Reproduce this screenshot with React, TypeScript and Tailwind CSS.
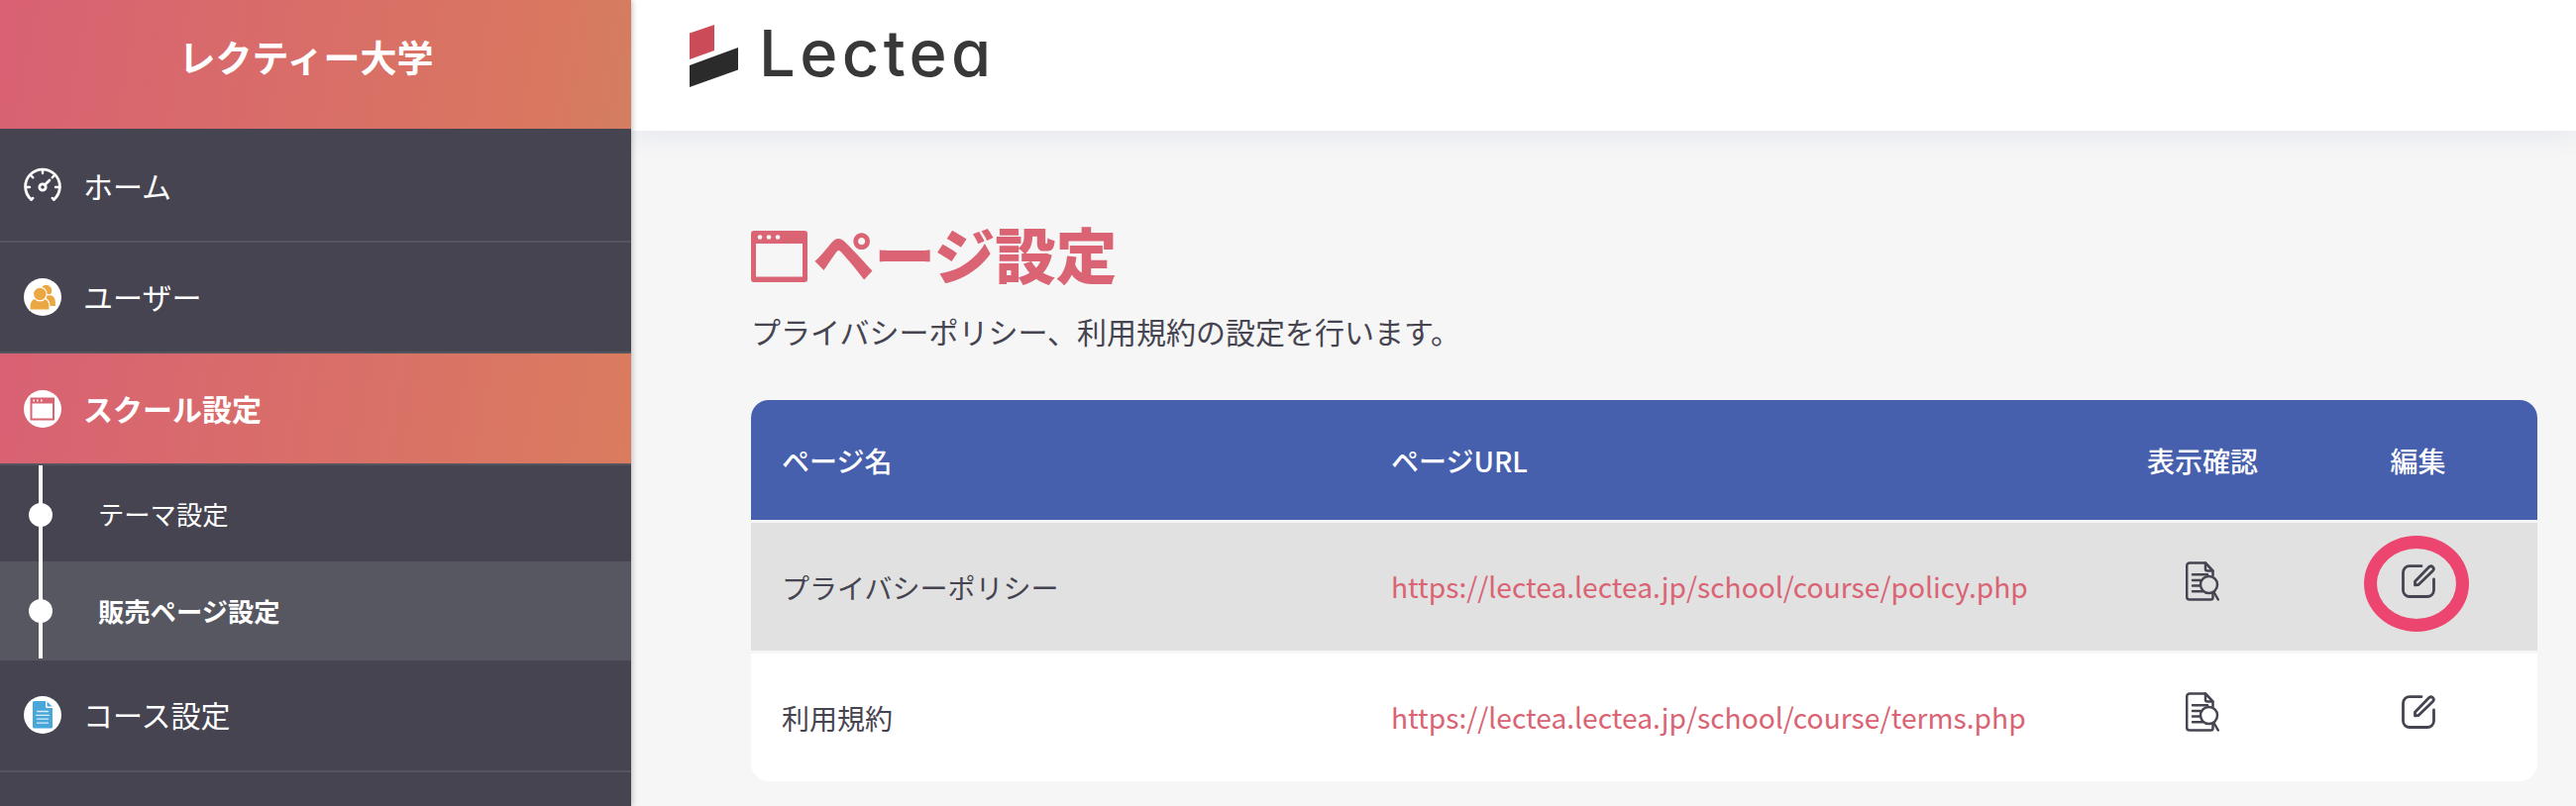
import type { ReactNode } from "react";

type MenuItemProps = {
  icon: ReactNode;
  label: string;
  active?: boolean;
  className: string;
};

type PageRow = {
  name: string;
  url: string;
  highlighted: boolean;
};

const pages: PageRow[] = [
  {
    name: "プライバシーポリシー",
    url: "https://lectea.lectea.jp/school/course/policy.php",
    highlighted: true,
  },
  {
    name: "利用規約",
    url: "https://lectea.lectea.jp/school/course/terms.php",
    highlighted: false,
  },
];

function GaugeIcon() {
  return (
    <svg viewBox="0 0 38 38" className="size-[38px]" fill="none" stroke="#fff" strokeWidth="2.8" strokeLinecap="round">
      <path d="M7.5 32.5A17.4 17.4 0 1 1 30.5 32.5" />
      <path d="M7.5 32.500l1.800-1.500M30.500 32.500l-1.800-1.500M19 2.500v3.500M2.500 20h3.500M35.500 20h-3.500M7.500 8.500l1.800 1.800M30.500 8.500l-1.800 1.800" strokeWidth="2.400" />
      <circle cx="19" cy="20" r="3.200" />
      <path d="M21.500 17.500l4.500-4.500" />
    </svg>
  );
}

function UsersIcon() {
  return (
    <svg viewBox="0 0 38 38" className="size-[38px]">
      <circle cx="19" cy="19" r="19" fill="#fff" />
      <g fill="#eba742" stroke="#fff" strokeWidth="1.2">
        <circle cx="22.500" cy="12.500" r="6.400" />
        <path d="M20 28.700h12.500v-4c0-4-2-7-5-8h-8z" />
        <path d="M6 32.200v-4.500c0-4.500 3-7.500 6.500-7.500h7c3.500 0 6.500 3 6.500 7.500v4.500z" />
        <circle cx="16.300" cy="16" r="6.800" />
      </g>
    </svg>
  );
}

function WindowIcon() {
  return (
    <svg viewBox="0 0 38 38" className="size-[38px]">
      <circle cx="19" cy="19" r="19" fill="#fff" />
      <rect x="7.500" y="8.500" width="22.500" height="21" fill="none" stroke="#d96572" strokeWidth="2" />
      <path d="M7 8h23.500v5.500H7z" fill="#d96572" />
      <path d="M9.500 10.500h1.500M13 10.500h1.500M17 10.500h1.500" stroke="#fff" strokeWidth="1.800" />
    </svg>
  );
}

function DocumentIcon() {
  return (
    <svg viewBox="0 0 38 38" className="size-[38px]">
      <circle cx="19" cy="19" r="19" fill="#fff" />
      <path d="M10.500 5h11.500v5.500c0 1 .6 1.500 1.500 1.500h5.500v19a1.500 1.500 0 0 1-1.500 1.500h-17A1.500 1.500 0 0 1 9 31V6.500A1.500 1.500 0 0 1 10.500 5z" fill="#49a6d8" />
      <path d="M23.500 5.500l5 5h-5z" fill="#49a6d8" />
      <path d="M13.500 15.500h11M12.500 19.300h13M13.500 23.200h11M13.500 27.200h11" stroke="#d8eef9" strokeWidth="1.300" strokeLinecap="round" />
    </svg>
  );
}

function HeadingIcon() {
  return (
    <svg viewBox="0 0 57 52" className="h-[52px] w-[57px]">
      <path
        fillRule="evenodd"
        fill="#da6374"
        d="M3 0h51a3 3 0 0 1 3 3v46a3 3 0 0 1-3 3H3a3 3 0 0 1-3-3V3a3 3 0 0 1 3-3zM5 13v33.500h47V13z"
      />
      <g fill="#f6f6f6">
        <circle cx="9" cy="6.500" r="2.300" />
        <circle cx="18" cy="6.500" r="2.300" />
        <circle cx="27" cy="6.500" r="2.300" />
      </g>
    </svg>
  );
}

function PreviewIcon() {
  return (
    <svg viewBox="0 0 34 40" className="h-10 w-[34px]" fill="none" stroke="#454450" strokeWidth="2.500" strokeLinecap="round" strokeLinejoin="round">
      <path d="M27.500 14.500V9.500L20 1.500H4A2.800 2.800 0 0 0 1.200 4.300v31.400A2.800 2.800 0 0 0 4 38.500h21.500a2 2 0 0 0 2-2V33" />
      <path d="M20 1.500V7.500a2 2 0 0 0 2 2h5.500z" />
      <path d="M7 13.200h15M7 19h8M7 24.500h7M7 30.200h10" />
      <circle cx="23.500" cy="23.500" r="8.500" />
      <path d="M28.500 31l4.300 7.500" />
    </svg>
  );
}

function EditIcon() {
  return (
    <svg viewBox="0 0 34 34" className="size-[34px]" fill="none" stroke="#454450" strokeWidth="2.800" strokeLinecap="round" strokeLinejoin="round">
      <path d="M20 1.700H8A6.500 6.500 0 0 0 1.500 8.200v18A6.500 6.500 0 0 0 8 32.500h18a6.500 6.500 0 0 0 6.500-6.300V15" />
      <path d="M13.500 20.800v-3.600L27.500 2.700a2.600 2.600 0 0 1 4 3.700L17 20.500z" />
    </svg>
  );
}

function MenuItem({ icon, label, active = false, className }: MenuItemProps) {
  return (
    <li
      className={`flex items-center gap-[22px] border-b-2 border-[#55555f] pl-6 text-[30px] leading-none ${
        active ? "bg-linear-[100deg,#d86173,#da7c5f] bg-origin-border font-bold" : ""
      } ${className}`}
    >
      {icon}
      <span className="pb-[2px]">{label}</span>
    </li>
  );
}

function Sidebar() {
  return (
    <aside className="relative z-10 flex w-[637px] shrink-0 flex-col bg-[#454450] text-white shadow-[1px_0_6px_rgba(0,0,0,0.25)]">
      <div className="flex h-[130px] items-center justify-center bg-linear-[100deg,#d86173,#d97760_85%,#d47e60] pb-[16px] pr-[19px] text-[37px] font-bold leading-none">
        レクティー大学
      </div>
      <ul>
        <MenuItem icon={<GaugeIcon />} label="ホーム" className="h-[115px] pt-[3px]" />
        <MenuItem icon={<UsersIcon />} label="ユーザー" className="h-[112px]" />
        <MenuItem icon={<WindowIcon />} label="スクール設定" active className="h-[113px]" />
      </ul>
      <div className="relative text-[26.3px] leading-none">
        <div className="flex h-[97px] items-center gap-[46px] pl-[29px] pt-[2px]">
          <span className="size-6 rounded-full bg-white" />
          <span>テーマ設定</span>
        </div>
        <div className="flex h-[100px] items-center gap-[46px] bg-[#575761] pl-[29px] font-bold">
          <span className="size-6 rounded-full bg-white" />
          <span>販売ページ設定</span>
        </div>
        <span className="absolute left-[39px] top-0 h-[195px] w-1 bg-white" />
      </div>
      <ul>
        <MenuItem icon={<DocumentIcon />} label="コース設定" className="h-[113px] pb-[2px]" />
      </ul>
    </aside>
  );
}

function Logo() {
  return (
    <div className="flex items-start">
      <svg viewBox="0 0 49 63" className="mt-[25px] h-[63px] w-[49px]">
        <path d="M0 8.500L25 0v26L0 35z" fill="#cc4b58" />
        <path d="M0 41L49 23v22.500L0 63z" fill="#2b2b2b" />
      </svg>
      <span className="ml-[21px] mt-[14px] font-['Inter'] text-[65px] font-medium leading-[80px] tracking-[4.400px] text-[#383838] [font-feature-settings:'cv11']">
        Lectea
      </span>
    </div>
  );
}

function PageTable() {
  return (
    <div className="flex w-[1803px] flex-col gap-[3px] overflow-hidden rounded-[18px] text-[28px] leading-none text-[#454450]">
      <div className="grid h-[121px] grid-cols-[615px_710px_218px_217px] items-center bg-[#4660ad] pl-[31px] font-medium text-white">
        <span>ページ名</span>
        <span>ページURL</span>
        <span className="text-center">表示確認</span>
        <span className="text-center">編集</span>
      </div>
      {pages.map((page) => (
        <div
          key={page.name}
          className={`grid h-[129px] grid-cols-[615px_710px_218px_217px] items-center pl-[31px] ${
            page.highlighted ? "bg-[#e1e1e1]" : "bg-white"
          }`}
        >
          <span>{page.name}</span>
          <a className="text-[28.2px] text-[#da6374]">{page.url}</a>
          <span className="flex justify-center pb-[11px]">
            <PreviewIcon />
          </span>
          <span className="relative flex justify-center pb-[11px]">
            <EditIcon />
            {page.highlighted && (
              <span className="absolute -top-[29px] left-[54px] h-[97px] w-[106px] rounded-[50%] border-[13px] border-[#ec456f]" />
            )}
          </span>
        </div>
      ))}
    </div>
  );
}

export default function App() {
  return (
    <div className="flex h-[814px] w-[2600px] overflow-hidden bg-[#f6f6f6] font-['Noto_Sans_CJK_JP',sans-serif]">
      <Sidebar />
      <div className="flex min-w-0 flex-1 flex-col">
        <header className="h-[132px] shrink-0 bg-white pl-[59px] shadow-[0_4px_26px_rgba(70,96,173,0.11)]">
          <Logo />
        </header>
        <main className="pl-[121px]">
          <div className="flex items-center gap-[6px] pt-[92px]">
            <HeadingIcon />
            <h1 className="pb-[6px] text-[61.5px] font-black leading-[64px] text-[#da6374]">ページ設定</h1>
          </div>
          <p className="mb-[48px] mt-[18px] text-[30px] leading-[44px] text-[#454450]">
            プライバシーポリシー、利用規約の設定を行います。
          </p>
          <PageTable />
        </main>
      </div>
    </div>
  );
}
